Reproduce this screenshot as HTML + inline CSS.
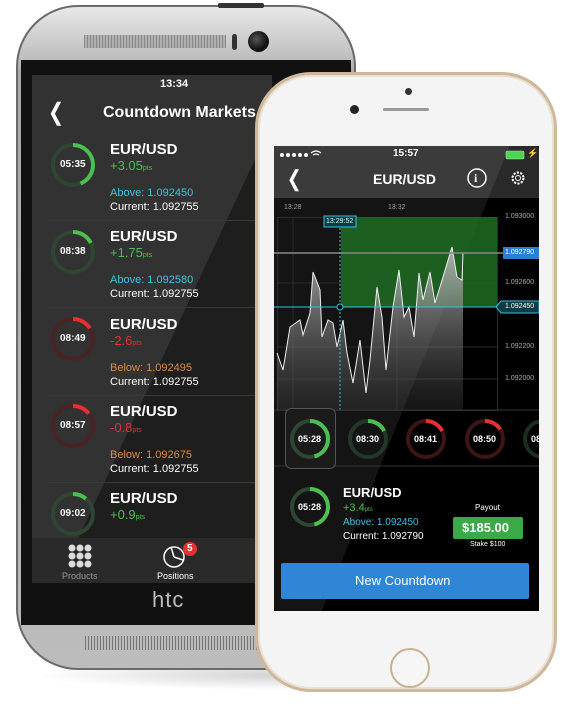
<!DOCTYPE html>
<html><head><meta charset="utf-8"><style>
*{margin:0;padding:0;box-sizing:border-box}
body{width:570px;height:713px;background:#fff;position:relative;overflow:hidden;font-family:"Liberation Sans",sans-serif}
.a{position:absolute}
.t{position:absolute;white-space:nowrap;color:#fff}
.b{font-weight:bold}
</style></head><body>

<div class="a" style="left:30px;top:660px;width:520px;height:30px;border-radius:50%;background:radial-gradient(ellipse at center,rgba(0,0,0,.18),rgba(0,0,0,0) 70%)"></div>

<div class="a" style="left:16px;top:5px;width:340px;height:665px;border-radius:62px;background:linear-gradient(#e8e8e8,#bdbdbd 8%,#a9a9a9 10%,#bcbcbc);border:2px solid #6a6a6a"></div>
<div class="a" style="left:218px;top:3px;width:46px;height:5px;background:#333;border-radius:2px"></div>
<div class="a" style="left:21px;top:60px;width:330px;height:565px;background:#111"></div>
<div class="a" style="left:84px;top:35px;width:142px;height:13px;background:repeating-linear-gradient(90deg,#777 0 1px,transparent 1px 3px),#aaa;opacity:.8"></div>
<div class="a" style="left:232px;top:34px;width:5px;height:16px;background:#333;border-radius:3px"></div>
<div class="a" style="left:248px;top:31px;width:21px;height:21px;background:radial-gradient(circle at 40% 40%,#555,#111 60%);border-radius:50%"></div>
<div class="a" style="left:85px;top:636px;width:180px;height:14px;background:repeating-linear-gradient(90deg,#666 0 1px,transparent 1px 3px),#bbb;opacity:.8"></div>

<div class="a" style="left:32px;top:75px;width:240px;height:508px;background:#1e1e1e;overflow:hidden">
 <div class="a" style="left:0;top:0;width:240px;height:508px;background:linear-gradient(115deg,rgba(255,255,255,.09) 0 55%,rgba(0,0,0,0) 55%)"></div>
</div>
<div class="a" style="left:32px;top:538px;width:240px;height:45px;background:#2a2a2a"></div>
<div class="t b" style="left:160px;top:78px;font-size:11px">13:34</div>
<div class="t" style="left:46px;top:98px;font-size:24px;font-weight:normal;transform:scaleX(.8)">&#10094;</div>
<div class="t b" style="left:103px;top:104px;font-size:16px">Countdown Markets</div>
<div class="a" style="left:32px;top:132px;width:240px;height:1px;background:#333"></div>

<div class="a" style="left:47px;top:220px;width:210px;height:1px;background:#3a3a3a"></div>
<div class="a" style="left:47px;top:307px;width:210px;height:1px;background:#3a3a3a"></div>
<div class="a" style="left:47px;top:395px;width:210px;height:1px;background:#3a3a3a"></div>
<div class="a" style="left:47px;top:482px;width:210px;height:1px;background:#3a3a3a"></div>

<svg class="a" style="left:0;top:0" width="570" height="713">
 <g fill="none" stroke-width="4">
  <circle cx="73" cy="165" r="20" stroke="#2f4632"/><circle cx="73" cy="165" r="20" stroke="#4bbf4f" stroke-dasharray="55 200" transform="rotate(-90 73 165)"/>
  <circle cx="73" cy="252" r="20" stroke="#2f4632"/><circle cx="73" cy="252" r="20" stroke="#4bbf4f" stroke-dasharray="22 200" transform="rotate(-90 73 252)"/>
  <circle cx="73" cy="339" r="20" stroke="#4a2424"/><circle cx="73" cy="339" r="20" stroke="#e53030" stroke-dasharray="20 200" transform="rotate(-90 73 339)"/>
  <circle cx="73" cy="426" r="20" stroke="#4a2424"/><circle cx="73" cy="426" r="20" stroke="#e53030" stroke-dasharray="18 200" transform="rotate(-90 73 426)"/>
  <circle cx="73" cy="514" r="20" stroke="#2f4632"/><circle cx="73" cy="514" r="20" stroke="#4bbf4f" stroke-dasharray="14 200" transform="rotate(-90 73 514)"/>
 </g>
 <g fill="#ddd"><circle cx="72" cy="548" r="3.5"/><circle cx="80" cy="548" r="3.5"/><circle cx="88" cy="548" r="3.5"/><circle cx="72" cy="556" r="3.5"/><circle cx="80" cy="556" r="3.5"/><circle cx="88" cy="556" r="3.5"/><circle cx="72" cy="564" r="3.5"/><circle cx="80" cy="564" r="3.5"/><circle cx="88" cy="564" r="3.5"/></g>
 <circle cx="174" cy="557" r="10" fill="none" stroke="#fff" stroke-width="1.5"/>
 <path d="M174 557 L171 547 M174 557 L183 560" stroke="#fff" stroke-width="1.5"/>
 <circle cx="190" cy="549" r="7" fill="#e53030"/>
</svg>
<div class="t b" style="left:187px;top:543px;font-size:10px">5</div>
<div class="t" style="left:62px;top:571px;font-size:9px;color:#999">Products</div>
<div class="t" style="left:157px;top:571px;font-size:9px">Positions</div>
<div class="t" style="left:152px;top:587px;font-size:22px;color:#bbb;letter-spacing:1px">htc</div>

<div class="t b" style="left:60px;top:159px;font-size:10px">05:35</div>
<div class="t b" style="left:60px;top:246px;font-size:10px">08:38</div>
<div class="t b" style="left:60px;top:333px;font-size:10px">08:49</div>
<div class="t b" style="left:60px;top:420px;font-size:10px">08:57</div>
<div class="t b" style="left:60px;top:508px;font-size:10px">09:02</div>

<div class="t b" style="left:110px;top:141px;font-size:15px">EUR/USD</div>
<div class="t" style="left:110px;top:158px;font-size:13px;color:#4bbf4f">+3.05<span style="font-size:7px">pts</span></div>
<div class="t" style="left:110px;top:187px;font-size:11px;color:#3cc3e0">Above: 1.092450</div>
<div class="t" style="left:110px;top:201px;font-size:11px">Current: 1.092755</div>

<div class="t b" style="left:110px;top:228px;font-size:15px">EUR/USD</div>
<div class="t" style="left:110px;top:245px;font-size:13px;color:#4bbf4f">+1.75<span style="font-size:7px">pts</span></div>
<div class="t" style="left:110px;top:274px;font-size:11px;color:#3cc3e0">Above: 1.092580</div>
<div class="t" style="left:110px;top:288px;font-size:11px">Current: 1.092755</div>

<div class="t b" style="left:110px;top:316px;font-size:15px">EUR/USD</div>
<div class="t" style="left:110px;top:333px;font-size:13px;color:#e53030">-2.6<span style="font-size:7px">pts</span></div>
<div class="t" style="left:110px;top:362px;font-size:11px;color:#d98c3f">Below: 1.092495</div>
<div class="t" style="left:110px;top:376px;font-size:11px">Current: 1.092755</div>

<div class="t b" style="left:110px;top:403px;font-size:15px">EUR/USD</div>
<div class="t" style="left:110px;top:420px;font-size:13px;color:#e53030">-0.8<span style="font-size:7px">pts</span></div>
<div class="t" style="left:110px;top:449px;font-size:11px;color:#d98c3f">Below: 1.092675</div>
<div class="t" style="left:110px;top:463px;font-size:11px">Current: 1.092755</div>

<div class="t b" style="left:110px;top:490px;font-size:15px">EUR/USD</div>
<div class="t" style="left:110px;top:507px;font-size:13px;color:#4bbf4f">+0.9<span style="font-size:7px">pts</span></div>

<div class="a" style="left:255px;top:72px;width:302px;height:620px;border-radius:56px;background:#f4f4f4;border:3px solid #cfb89a;box-shadow:inset 0 0 0 2px #e8e0d4"></div>
<div class="a" style="left:405px;top:88px;width:7px;height:7px;border-radius:50%;background:#333"></div>
<div class="a" style="left:350px;top:105px;width:9px;height:9px;border-radius:50%;background:#222"></div>
<div class="a" style="left:383px;top:108px;width:46px;height:3px;border-radius:2px;background:#999"></div>
<div class="a" style="left:390px;top:648px;width:40px;height:40px;border-radius:50%;border:2px solid #c9b08e;background:#f6f6f6"></div>

<div class="a" style="left:274px;top:146px;width:265px;height:465px;background:#000;overflow:hidden">
 <div class="a" style="left:0;top:0;width:265px;height:52px;background:#2a2a2a"></div>
 <div class="a" style="left:0;top:0;width:265px;height:465px;background:linear-gradient(112deg,rgba(255,255,255,.08) 0 52%,rgba(0,0,0,0) 52%)"></div>
</div>

<svg class="a" style="left:0;top:0" width="570" height="713">
 <defs>
  <linearGradient id="g1" x1="0" y1="0" x2="0" y2="1"><stop offset="0" stop-color="#bbb" stop-opacity=".9"/><stop offset="1" stop-color="#444" stop-opacity=".3"/></linearGradient>
  <clipPath id="cp"><rect x="274" y="146" width="265" height="465"/></clipPath>
 </defs>
 <g clip-path="url(#cp)">
 <g stroke="#2c2c2c" stroke-width="1">
  <rect x="277.5" y="217.5" width="220" height="193" fill="none"/>
  <line x1="293" y1="217" x2="293" y2="410"/><line x1="397" y1="217" x2="397" y2="410"/>
  <line x1="277" y1="283" x2="497" y2="283"/><line x1="277" y1="347" x2="497" y2="347"/><line x1="277" y1="379" x2="497" y2="379"/>
 </g>
 <rect x="341" y="217" width="156" height="90" fill="#1f6b23" opacity=".85"/>
 <polygon fill="url(#g1)" points="277,353 283,370 290,327 300,320 303,335 310,313 313,272 317,282 320,290 322,337 328,320 333,323 337,347 343,320 347,353 353,383 360,340 366,393 370,360 377,287 382,317 386,370 393,307 399,270 404,317 409,307 414,337 419,273 423,300 430,272 435,303 443,277 452,247 457,277 462,280 463,253 463,410 277,410"/>
 <polyline fill="none" stroke="#eee" stroke-width="1" points="277,353 283,370 290,327 300,320 303,335 310,313 313,272 317,282 320,290 322,337 328,320 333,323 337,347 343,320 347,353 353,383 360,340 366,393 370,360 377,287 382,317 386,370 393,307 399,270 404,317 409,307 414,337 419,273 423,300 430,272 435,303 443,277 452,247 457,277 462,280 463,253"/>
 <line x1="274" y1="253" x2="503" y2="253" stroke="#888" stroke-width="1.5"/>
 <line x1="274" y1="307" x2="500" y2="307" stroke="#36c3de" stroke-width="1"/>
 <line x1="340" y1="224" x2="340" y2="410" stroke="#36c3de" stroke-width="1" stroke-dasharray="2 2"/>
 <circle cx="340" cy="307" r="3" fill="#000" stroke="#36c3de"/>
 <rect x="324" y="216" width="32" height="11" fill="#0d3b44" stroke="#36c3de"/>
 <rect x="503" y="247" width="36" height="12" fill="#2a7ed6"/>
 <polygon points="496,307 501,301 539,301 539,313 501,313" fill="#0d3b44" stroke="#36c3de"/>
 <line x1="274" y1="410" x2="539" y2="410" stroke="#333"/>
 <line x1="274" y1="466" x2="539" y2="466" stroke="#333"/>
 <rect x="285.5" y="408.5" width="50" height="60" rx="6" fill="#1b1b1b" stroke="#555"/>
 <g fill="none" stroke-width="4">
  <circle cx="310" cy="439" r="18" stroke="#2f4632"/><circle cx="310" cy="439" r="18" stroke="#4bbf4f" stroke-dasharray="52 200" transform="rotate(-90 310 439)"/>
  <circle cx="368" cy="439" r="18" stroke="#24382a"/><circle cx="368" cy="439" r="18" stroke="#4bbf4f" stroke-dasharray="20 200" transform="rotate(-90 368 439)"/>
  <circle cx="426" cy="439" r="18" stroke="#3e1414"/><circle cx="426" cy="439" r="18" stroke="#e53030" stroke-dasharray="20 200" transform="rotate(-90 426 439)"/>
  <circle cx="485" cy="439" r="18" stroke="#3e1414"/><circle cx="485" cy="439" r="18" stroke="#e53030" stroke-dasharray="18 200" transform="rotate(-90 485 439)"/>
  <circle cx="543" cy="439" r="18" stroke="#1c2e20"/>
  <circle cx="310" cy="507" r="18" stroke="#2f4632"/><circle cx="310" cy="507" r="18" stroke="#4bbf4f" stroke-dasharray="52 200" transform="rotate(-90 310 507)"/>
 </g>
 </g>
 <g fill="#fff"><circle cx="282" cy="155" r="2"/><circle cx="288" cy="155" r="2"/><circle cx="294" cy="155" r="2"/><circle cx="300" cy="155" r="2"/><circle cx="306" cy="155" r="2"/></g>
 <path d="M311 153 Q316 149 321 153 M313 155 Q316 153 319 155" stroke="#fff" fill="none" stroke-width="1.2"/>
 <rect x="506" y="151" width="18" height="8" rx="1.5" fill="#4bd64f" stroke="#ccc" stroke-width=".6"/>
 <circle cx="477" cy="178" r="9" fill="none" stroke="#fff" stroke-width="1.5"/>
 <circle cx="518" cy="178" r="5.5" fill="none" stroke="#fff" stroke-width="2" stroke-dasharray="2.2 1.3"/>
 <circle cx="518" cy="178" r="2.5" fill="none" stroke="#fff" stroke-width="1"/>
 <rect x="453" y="517" width="70" height="22" rx="2" fill="#3aa947"/>
 <rect x="281" y="563" width="248" height="36" rx="2" fill="#2f86d6"/>
</svg>

<div class="t b" style="left:393px;top:148px;font-size:10px">15:57</div>
<div class="t b" style="left:527px;top:148px;font-size:9px">&#9889;</div>
<div class="t" style="left:285px;top:166px;font-size:22px;transform:scaleX(.8)">&#10094;</div>
<div class="t b" style="left:373px;top:171px;font-size:14px">EUR/USD</div>
<div class="t b" style="left:474px;top:171px;font-size:12px;font-family:'Liberation Serif',serif">i</div>
<div class="t" style="left:284px;top:204px;font-size:7px;color:#999">13:28</div>
<div class="t" style="left:388px;top:204px;font-size:7px;color:#999">13:32</div>
<div class="t" style="left:326px;top:218px;font-size:7px;color:#cfe">13:29:52</div>
<div class="t" style="left:505px;top:213px;font-size:7px;color:#aaa">1.093000</div>
<div class="t" style="left:505px;top:249px;font-size:7px">1.092790</div>
<div class="t" style="left:505px;top:279px;font-size:7px;color:#aaa">1.092600</div>
<div class="t" style="left:505px;top:303px;font-size:7px">1.092450</div>
<div class="t" style="left:505px;top:343px;font-size:7px;color:#aaa">1.092200</div>
<div class="t" style="left:505px;top:375px;font-size:7px;color:#aaa">1.092000</div>

<div class="t b" style="left:298px;top:434px;font-size:9px">05:28</div>
<div class="t b" style="left:356px;top:434px;font-size:9px">08:30</div>
<div class="t b" style="left:414px;top:434px;font-size:9px">08:41</div>
<div class="t b" style="left:473px;top:434px;font-size:9px">08:50</div>
<div class="a" style="left:531px;top:430px;width:8px;height:16px;overflow:hidden"><div class="t b" style="left:0;top:4px;font-size:9px">08</div></div>
<div class="t b" style="left:298px;top:502px;font-size:9px">05:28</div>

<div class="t b" style="left:343px;top:485px;font-size:13px">EUR/USD</div>
<div class="t" style="left:343px;top:502px;font-size:11px;color:#4bbf4f">+3.4<span style="font-size:6px">pts</span></div>
<div class="t" style="left:343px;top:517px;font-size:10px;color:#3cc3e0">Above: 1.092450</div>
<div class="t" style="left:343px;top:531px;font-size:10px">Current: 1.092790</div>
<div class="t" style="left:475px;top:503px;font-size:8px">Payout</div>
<div class="t b" style="left:462px;top:520px;font-size:13px">$185.00</div>
<div class="t" style="left:470px;top:541px;font-size:7px">Stake $100</div>
<div class="t" style="left:355px;top:573px;font-size:13px">New Countdown</div>

</body></html>
